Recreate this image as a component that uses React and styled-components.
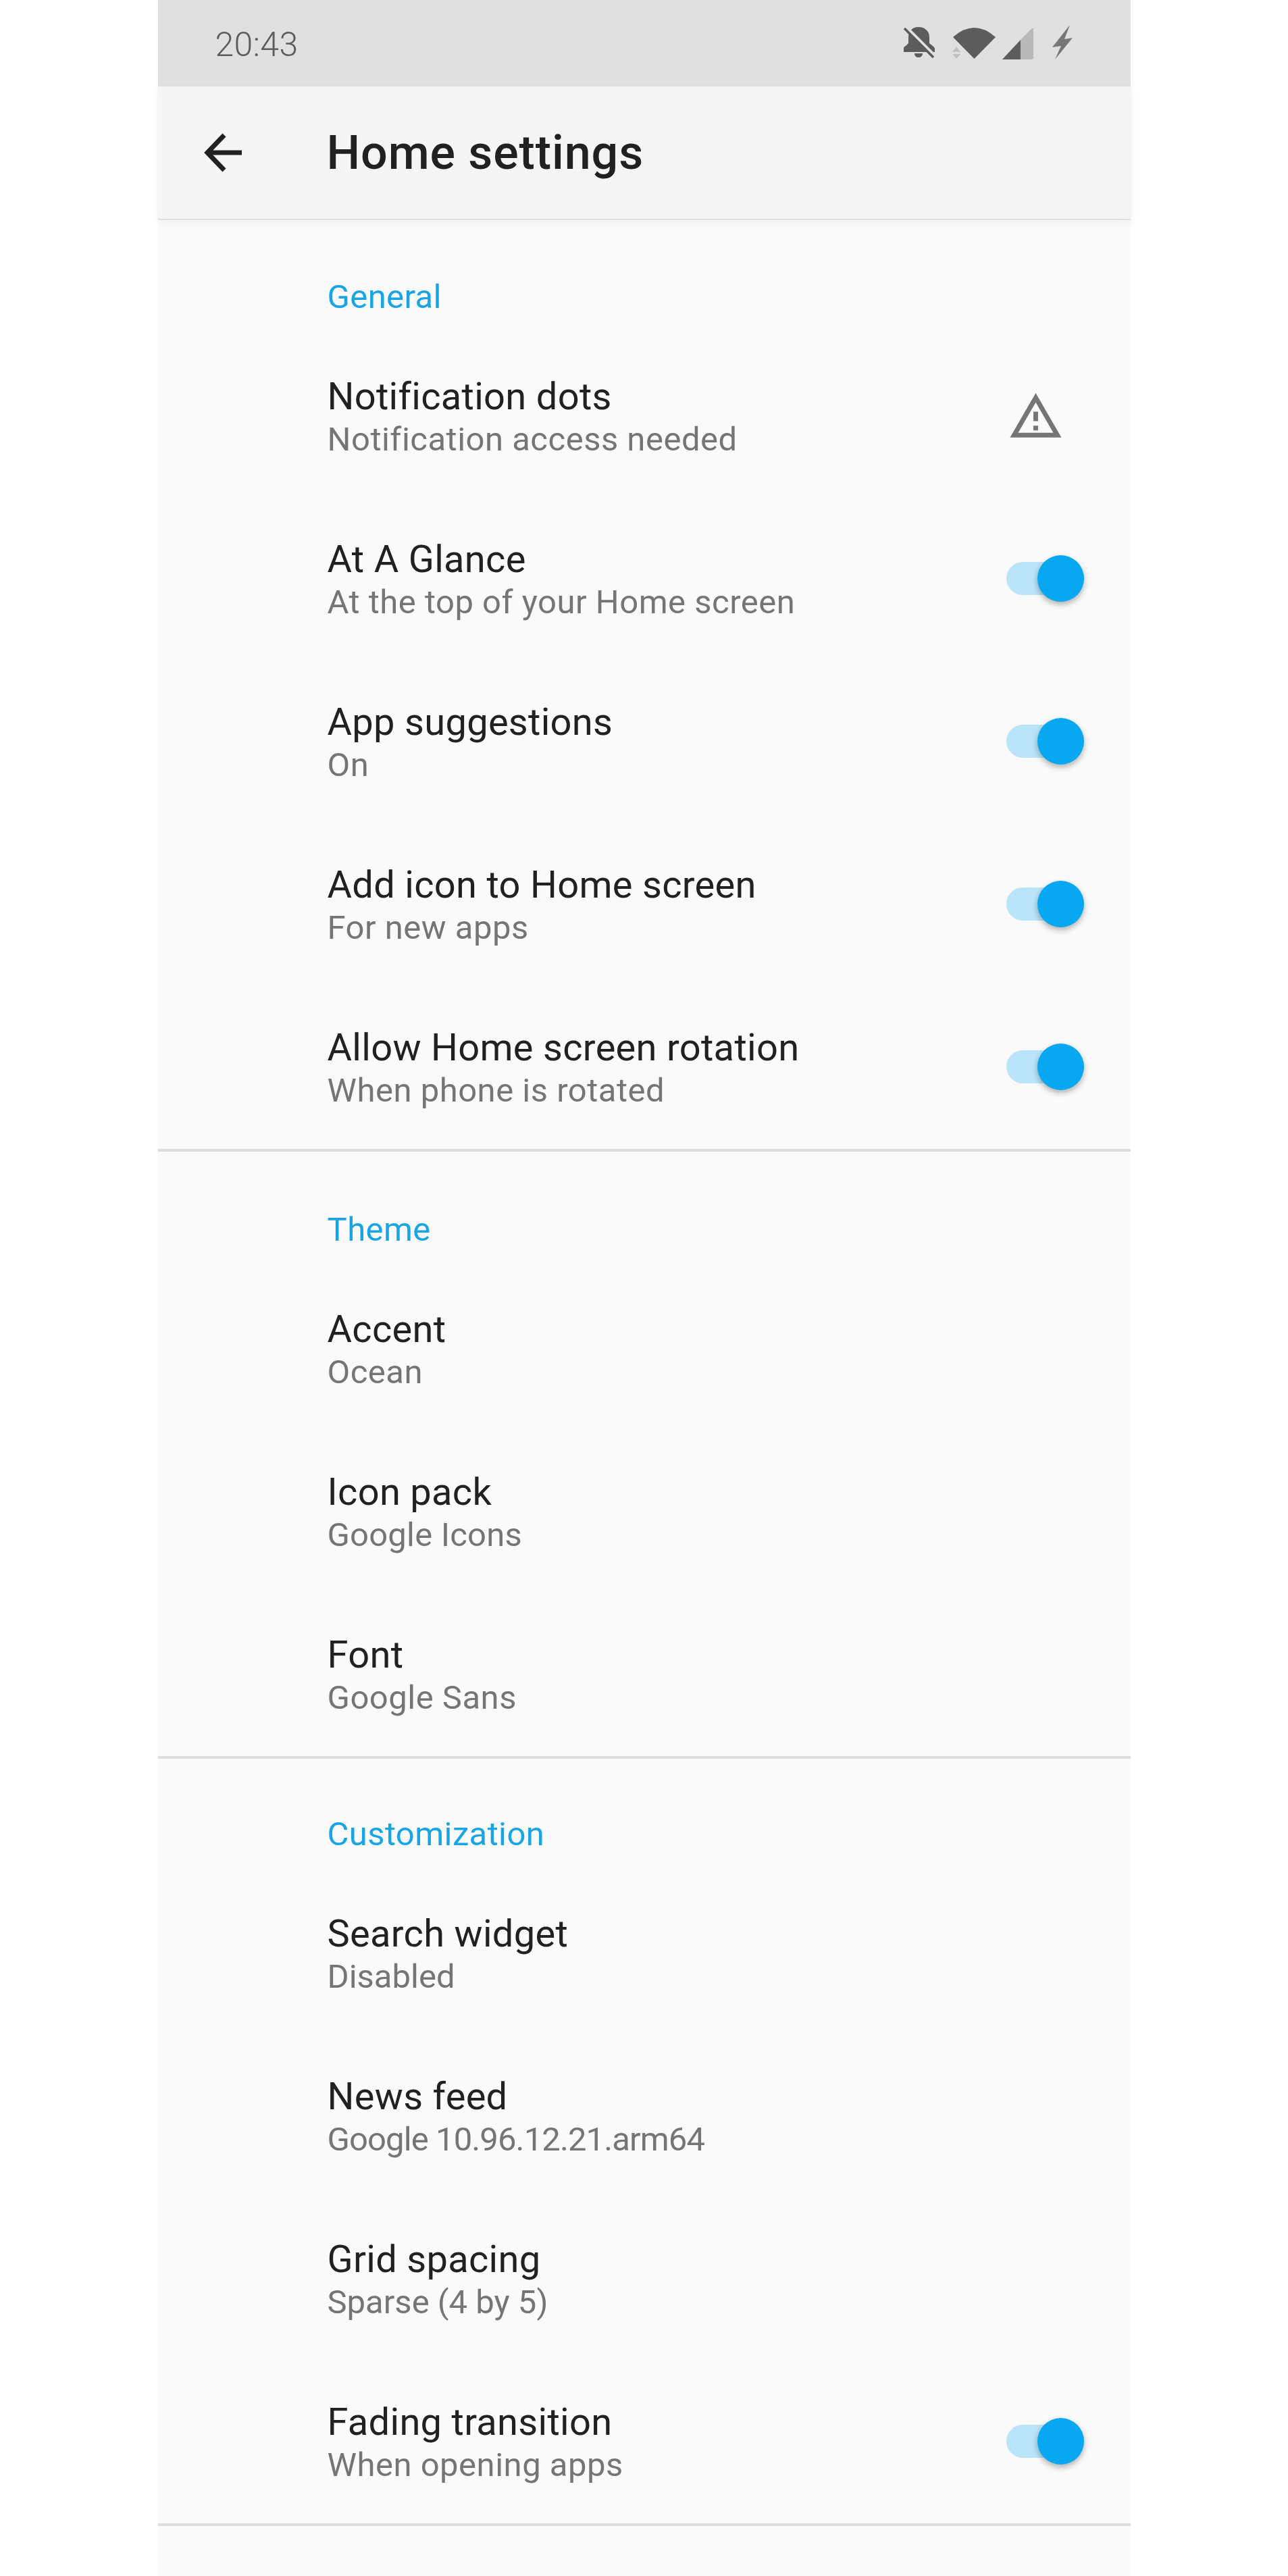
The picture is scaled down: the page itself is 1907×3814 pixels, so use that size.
import React from 'react';
import styled, {createGlobalStyle} from 'styled-components';

const Global = createGlobalStyle`
    html, body {
        margin: 0;
        padding: 0;
        background: #fff;
    }
`;
const Page = styled.div`
    display: flex;
    justify-content: center;
    width: 100%;
    height: 3814px;
    overflow: hidden;
    font-family: Roboto, "Liberation Sans", sans-serif;
`;
const Phone = styled.div`
    width: 1440px;
    background: #fafafa;
`;
const StatusBar = styled.div`
    height: 128px;
    background: #e0e0e0;
    display: flex;
    justify-content: space-between;
    align-items: center;
    padding: 0 86px 0 85px;
    box-sizing: border-box;
`;
const Clock = styled.span`
    font-weight: 300;
    font-size: 50px;
    color: #5c5c5c;
    margin-top: 3px;
    letter-spacing: .3px;
`;
const StatusIcons = styled.div`
    display: flex;
    align-items: center;
`;
const Glyph = styled.span`
    display: flex;
    margin-left: ${(p) => p.$gap || 0}px;
`;
const Toolbar = styled.header`
    position: relative;
    height: 196px;
    background: #f5f5f5;
    display: flex;
    align-items: center;
    padding-left: 68px;
    box-shadow: 0 1px 1px rgba(0,0,0,.12), 0 4px 12px rgba(0,0,0,.06);
`;
const Title = styled.h1`
    margin: 0 0 0 126px;
    font-size: 70px;
    font-weight: 500;
    letter-spacing: .9px;
    color: #212121;
`;
const Section = styled.section`
    border-bottom: 4px solid #dcdcdc;
`;
const SectionTitle = styled.div`
    height: ${(p) => p.$height}px;
    box-sizing: border-box;
    padding: ${(p) => p.$height - 84}px 0 0 251px;
    font-size: 49px;
    line-height: 56px;
    letter-spacing: .4px;
    color: #18a5e6;
`;
const Row = styled.div`
    height: 241px;
    display: flex;
    align-items: center;
    justify-content: space-between;
    padding: 0 69px 0 251px;
    box-sizing: border-box;
`;
const RowText = styled.div`
    display: flex;
    flex-direction: column;
    padding-top: 4px;
`;
const RowTitle = styled.div`
    font-size: 56px;
    line-height: 64px;
    letter-spacing: .3px;
    color: #212121;
`;
const RowSub = styled.div`
    font-size: 49px;
    line-height: 64px;
    letter-spacing: ${(p) => p.$tracking ?? 0.5}px;
    color: #757575;
`;
const Toggle = styled.div`
    position: relative;
    width: 115px;
    height: 49px;
    margin-top: -2px;
    border-radius: 25px;
    background: #b9e4f9;
`;
const Thumb = styled.div`
    position: absolute;
    right: 0;
    top: -10px;
    width: 69px;
    height: 69px;
    border-radius: 50%;
    background: #07a7f2;
    box-shadow: 0 4px 8px rgba(0,0,0,.3);
`;
const WarnSlot = styled.div`
    display: flex;
    margin-right: 30px;
`;

const BellOff = () => (
    <svg width="46" height="48" viewBox="0 0 46 48">
        <path d="M0 37v-5q0-3 3-4l4-4V15C7 6 13 0 22 0s16 6 16 15v9l5 4q3 2 3 4v5zM16 39h12c0 4-3 6-6 6s-6-2-6-6z" fill="#5c5c5c" />
        <path d="M4 0L47 43" stroke="#e0e0e0" strokeWidth="4" />
        <path d="M1 2L44 45" stroke="#5c5c5c" strokeWidth="3.500" />
    </svg>
);
const Wifi = () => (
    <svg width="64" height="47" viewBox="0 0 64 47">
        <path d="M1 14Q32.500-14 64 14L32.500 46z" fill="#5c5c5c" />
        <path d="M0 36L6 28 12.500 36zM0 39H12.500L6 46z" fill="#c2c2c2" />
    </svg>
);
const Signal = () => (
    <svg width="46" height="47" viewBox="0 0 46 47">
        <path d="M27 18L44 1q2-1 2 1v42q0 3-3 3H27z" fill="#b8b8b8" />
        <path d="M0 47L27 18v29z" fill="#5c5c5c" />
    </svg>
);
const Bolt = () => (
    <svg width="30" height="54" viewBox="0 0 30 54">
        <path d="M26 0L0 33 13 31 4 51 30 19 18 21z" fill="#777" />
    </svg>
);
const BackArrow = () => (
    <svg width="56" height="58" viewBox="0 0 56 58">
        <path d="M56 29H6M30 3L5 29 30 55" fill="none" stroke="#212121" strokeWidth="7" />
    </svg>
);
const Warning = () => (
    <svg width="83" height="83" viewBox="0 0 24 24">
        <path d="M12 5.990L19.530 19H4.470L12 5.990M12 2L1 21h22L12 2zm1 14h-2v2h2v-2zm0-6h-2v4h2v-4z" fill="#757575" />
    </svg>
);

const sections = [
    {title: 'General', head: 172, rows: [
        {name: 'Notification dots', sub: 'Notification access needed', end: 'warn'},
        {name: 'At A Glance', sub: 'At the top of your Home screen', end: 'toggle'},
        {name: 'App suggestions', sub: 'On', end: 'toggle'},
        {name: 'Add icon to Home screen', sub: 'For new apps', end: 'toggle'},
        {name: 'Allow Home screen rotation', sub: 'When phone is rotated', end: 'toggle'},
    ]},
    {title: 'Theme', head: 172, rows: [
        {name: 'Accent', sub: 'Ocean'},
        {name: 'Icon pack', sub: 'Google Icons', tracking: 0.2},
        {name: 'Font', sub: 'Google Sans'},
    ]},
    {title: 'Customization', head: 168, rows: [
        {name: 'Search widget', sub: 'Disabled', tracking: 0},
        {name: 'News feed', sub: 'Google 10.96.12.21.arm64', tracking: -0.9},
        {name: 'Grid spacing', sub: 'Sparse (4 by 5)', tracking: 0},
        {name: 'Fading transition', sub: 'When opening apps', end: 'toggle'},
    ]},
];

function App(){
    return (
        <Page>
            <Global />
            <Phone>
                <StatusBar>
                    <Clock>20:43</Clock>
                    <StatusIcons>
                        <Glyph><BellOff /></Glyph>
                        <Glyph $gap={26}><Wifi /></Glyph>
                        <Glyph $gap={10}><Signal /></Glyph>
                        <Glyph $gap={28}><Bolt /></Glyph>
                    </StatusIcons>
                </StatusBar>
                <Toolbar>
                    <BackArrow />
                    <Title>Home settings</Title>
                </Toolbar>
                {sections.map((s) => (
                    <Section key={s.title}>
                        <SectionTitle $height={s.head}>{s.title}</SectionTitle>
                        {s.rows.map((r) => (
                            <Row key={r.name}>
                                <RowText>
                                    <RowTitle>{r.name}</RowTitle>
                                    <RowSub $tracking={r.tracking}>{r.sub}</RowSub>
                                </RowText>
                                {r.end === 'toggle' && <Toggle><Thumb /></Toggle>}
                                {r.end === 'warn' && <WarnSlot><Warning /></WarnSlot>}
                            </Row>
                        ))}
                    </Section>
                ))}
            </Phone>
        </Page>
    );
}
export default App;
